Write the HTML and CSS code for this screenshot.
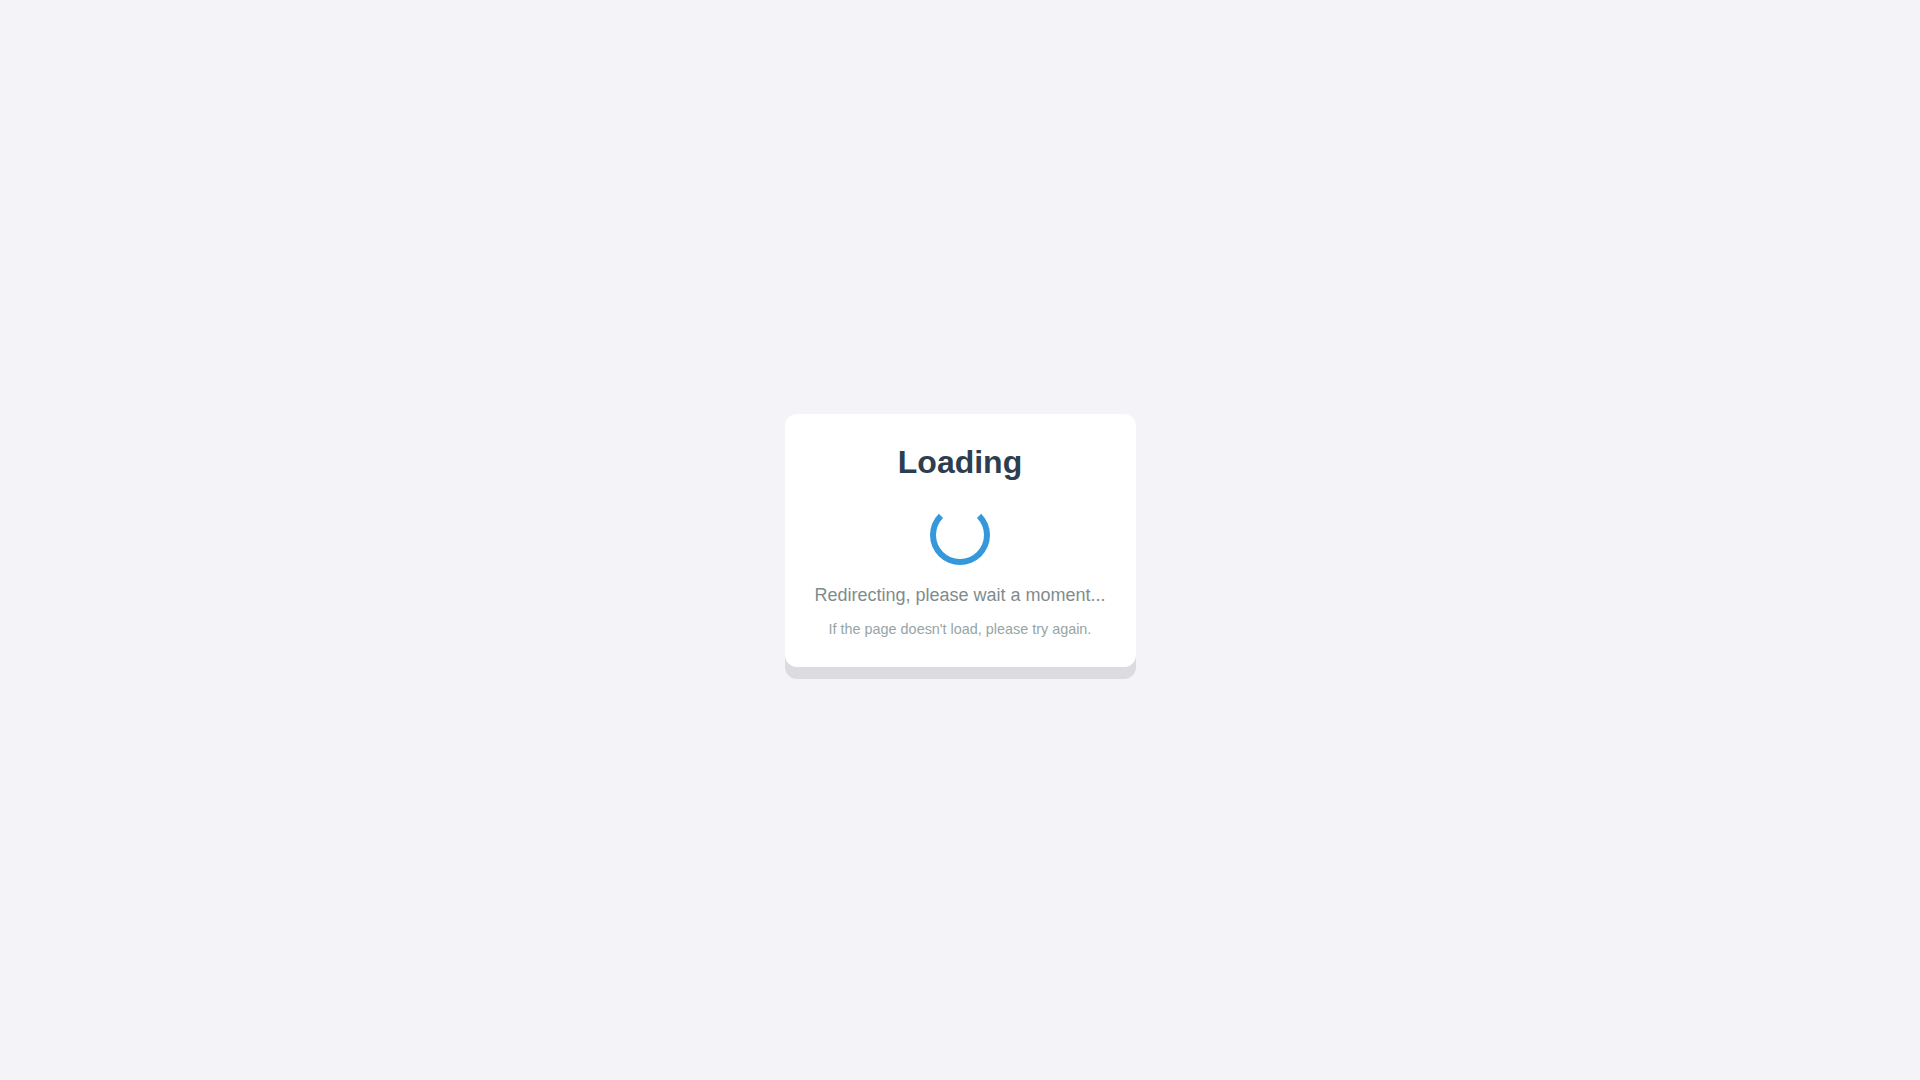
FILE: index.html
```html
<!DOCTYPE html>
<html lang="en">
<head>
<meta charset="utf-8">
<title>Loading</title>
<link rel="stylesheet" href="styles.css">
</head>
<body>
<main class="page">
  <section class="card">
    <h1 class="title">Loading</h1>
    <div class="spinner"></div>
    <p class="message">Redirecting, please wait a moment...</p>
    <p class="hint">If the page doesn't load, please try again.</p>
  </section>
</main>
</body>
</html>
```

FILE: styles.css
```css
html, body {
  margin: 0;
  padding: 0;
  height: 100%;
}
body {
  background: #f4f4f8;
  font-family: "Liberation Sans", Arial, sans-serif;
}
.page {
  height: 100%;
  display: flex;
  align-items: center;
  justify-content: center;
}
.card {
  width: 351px;
  box-sizing: border-box;
  background: #ffffff;
  border-radius: 12px;
  box-shadow: 0 12px 0 #dcdbe0;
  padding: 30px 20px 30px;
  display: flex;
  flex-direction: column;
  align-items: center;
  text-align: center;
}
.title {
  margin: 0 0 24px;
  font-size: 32px;
  font-weight: 700;
  line-height: normal;
  color: #2c3e50;
}
.spinner {
  width: 48px;
  height: 48px;
  border: 6px solid #3498db;
  border-top-color: transparent;
  border-radius: 50%;
}
.message {
  margin: 20px 0 15px;
  font-size: 18px;
  line-height: normal;
  color: #7f8c8d;
}
.hint {
  margin: 0;
  font-size: 14.4px;
  line-height: normal;
  color: #95a5a6;
}
```
